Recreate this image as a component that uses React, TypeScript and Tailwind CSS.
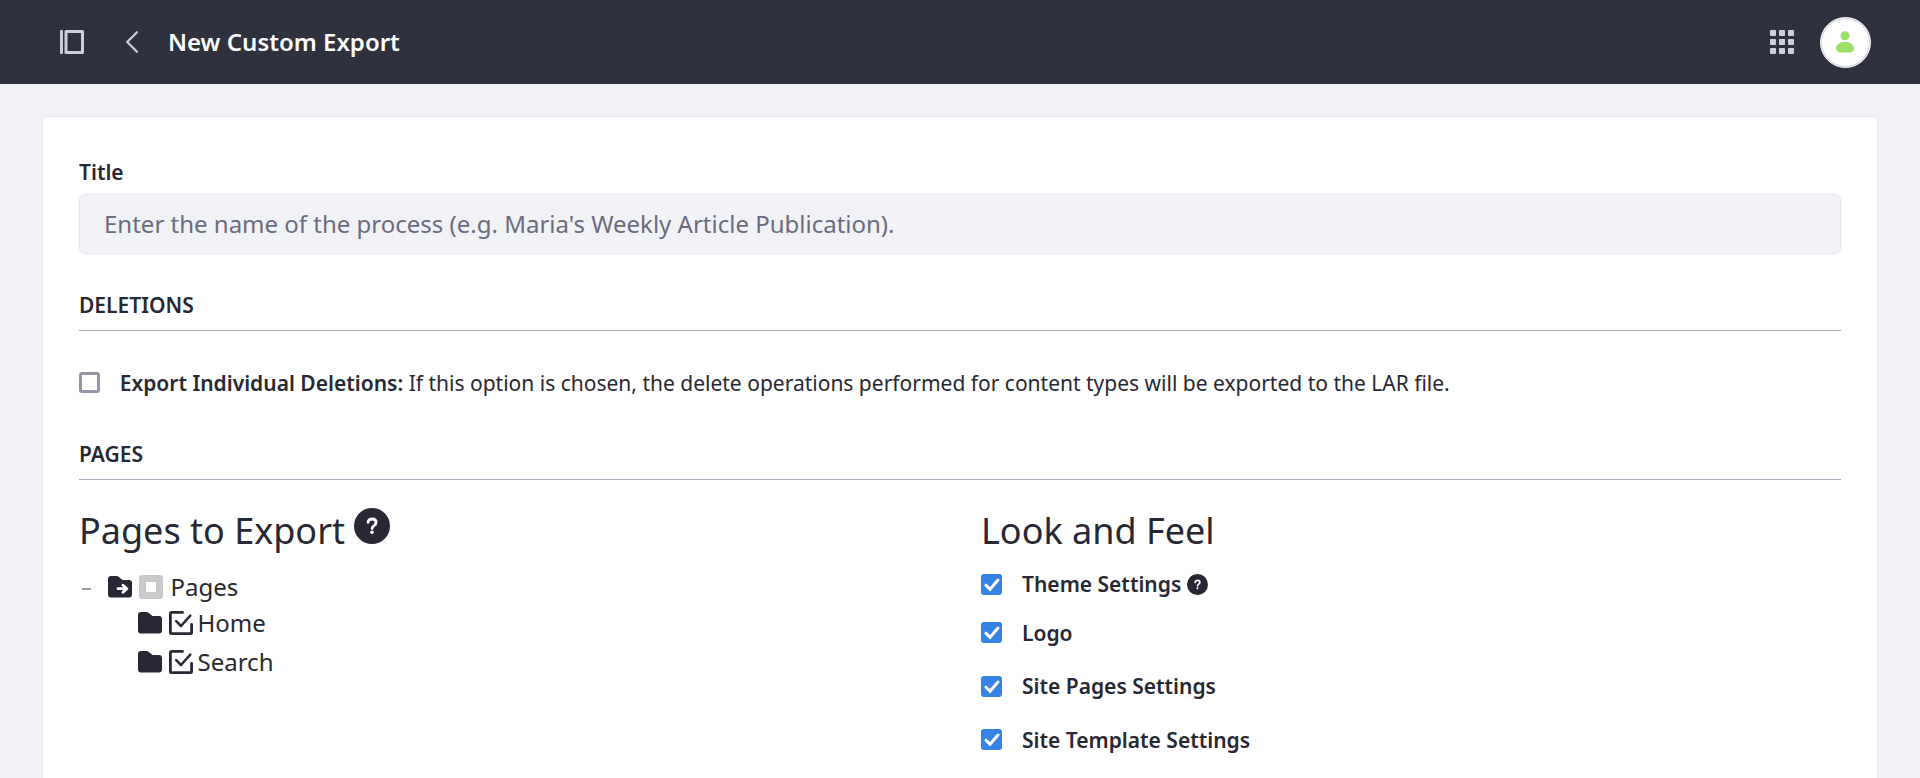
import React from "react";

function ProductMenuIcon() {
  return (
    <svg className="block size-6" viewBox="0 0 24 24" fill="#cdced9">
      <rect x="0" y="0" width="3" height="24" rx="1" />
      <path fillRule="evenodd" d="M6 0h16.500A1.500 1.500 0 0 1 24 1.500v21a1.500 1.500 0 0 1-1.500 1.500H6a1.500 1.500 0 0 1-1.500-1.500v-21A1.500 1.500 0 0 1 6 0Zm1.500 3v18H21V3Z" />
    </svg>
  );
}

function AngleLeftIcon() {
  return (
    <svg className="block size-6" viewBox="0 0 24 24" fill="none" stroke="#cdced9" strokeWidth="2.200" strokeLinecap="round" strokeLinejoin="round">
      <path d="M17 2.200 7.200 12l9.800 9.800" />
    </svg>
  );
}

function GridIcon() {
  return (
    <svg className="block size-6" viewBox="0 0 24 24" fill="#cdced9">
      {[0, 9, 18].map((y) => [0, 9, 18].map((x) => <rect key={`${x}-${y}`} x={x} y={y} width="6" height="6" rx="0.800" />))}
    </svg>
  );
}

function UserIcon() {
  return (
    <svg className="block h-[22px] w-[18px]" viewBox="0 0 18 22" fill="#9be169">
      <circle cx="9" cy="4.700" r="4.500" />
      <path d="M9 10.700c5 0 9 3.100 9 6.900 0 2.800-2.200 4-5 4H5c-2.800 0-5-1.200-5-4 0-3.800 4-6.900 9-6.900Z" />
    </svg>
  );
}

function HelpIcon({ className }: { className: string }) {
  return (
    <svg className={className} viewBox="0 0 36 36" fill="none">
      <circle cx="18" cy="18" r="18" fill="#272833" />
      <path d="M14 14.300c.3-2.100 1.900-3.300 4.100-3.300 2.300 0 4 1.300 4 3.400 0 3.200-4 3-4 6.100" stroke="#fff" strokeWidth="2.800" strokeLinecap="round" strokeLinejoin="round" />
      <circle cx="18" cy="24.300" r="1.800" fill="#fff" />
    </svg>
  );
}

function FolderIcon({ arrow = false }: { arrow?: boolean }) {
  return (
    <svg className="block size-6 shrink-0" viewBox="0 0 24 24" fill="none">
      <path d="M0 4a3 3 0 0 1 3-3h5.500c.9 0 1.700.3 2.300.9L14.600 5H21a3 3 0 0 1 3 3v11.500a3 3 0 0 1-3 3H3a3 3 0 0 1-3-3Z" fill="#272833" />
      {arrow && <path d="M10 13.700h8.500M15 10.200l3.900 3.500-3.900 3.500" stroke="#fff" strokeWidth="2.800" strokeLinecap="round" strokeLinejoin="round" />}
    </svg>
  );
}

function CheckSquareIcon() {
  return (
    <svg className="block size-6 shrink-0" viewBox="0 0 24 24" fill="none" stroke="#272833" strokeLinecap="round" strokeLinejoin="round">
      <path d="M13.500 1.400H2.500A1.100 1.100 0 0 0 1.400 2.500v19a1.100 1.100 0 0 0 1.100 1.100h19a1.100 1.100 0 0 0 1.100-1.100v-8" strokeWidth="2.800" />
      <path d="m7.200 10.200 4.800 4.800 9.300-10.300" strokeWidth="2.500" />
    </svg>
  );
}

function PartialSquareIcon() {
  return (
    <span className="flex size-6 shrink-0 items-center justify-center rounded-[3px] bg-[#c9c9cb]">
      <span className="size-[10px] rounded-[1px] bg-white" />
    </span>
  );
}

function CheckedBox() {
  return (
    <svg className="block size-[21px] shrink-0" viewBox="0 0 21 21" fill="none">
      <rect width="21" height="21" rx="3" fill="#3584e4" />
      <path d="m5 11.200 4 4.100 8-9.300" stroke="#fff" strokeWidth="3" strokeLinecap="round" strokeLinejoin="miter" />
    </svg>
  );
}

function SectionHeading({ children }: { children: React.ReactNode }) {
  return <h3 className="h-[50px] border-b border-[#a7a9bc] text-[21px] leading-[48px] font-semibold">{children}</h3>;
}

function Option({ label, help = false, className, textClass = "leading-[21px]" }: { label: string; help?: boolean; className: string; textClass?: string }) {
  return (
    <label className={`flex h-[21px] items-start text-[21px] font-semibold ${className}`}>
      <CheckedBox />
      <span className={`ml-5 ${textClass}`}>{label}</span>
      {help && <HelpIcon className="ml-[6px] block size-[21px]" />}
    </label>
  );
}

export default function App() {
  return (
    <div className="h-[778px] w-full overflow-hidden bg-[#f1f2f5] font-['Noto_Sans',sans-serif] text-[#272833]">
      <header className="flex h-[84px] items-center bg-[#30313f] pr-[49px] pl-[60px]">
        <ProductMenuIcon />
        <div className="ml-9">
          <AngleLeftIcon />
        </div>
        <h1 className="ml-6 text-2xl font-semibold text-white">New Custom Export</h1>
        <div className="ml-auto">
          <GridIcon />
        </div>
        <div className="mt-px ml-[26px] flex size-[51px] items-center justify-center rounded-full border border-[#f1f2f5] bg-white pr-px pb-px inset-ring inset-ring-[#d0d1da]">
          <UserIcon />
        </div>
      </header>

      <main className="mx-[42px] mt-8 h-[700px] rounded-md border border-[#e7e7ed] bg-white px-9 pt-[41px]">
        <label className="block h-9 text-[21px] leading-7 font-semibold">Title</label>
        <input
          className="block h-[60px] w-full rounded-md border border-[#e7e7ed] bg-[#f1f2f5] px-6 pb-[2px] text-2xl placeholder:text-[#6b6c7e] placeholder:opacity-100"
          placeholder="Enter the name of the process (e.g. Maria's Weekly Article Publication)."
        />

        <div className="mt-[27px]">
          <SectionHeading>DELETIONS</SectionHeading>
        </div>
        <label className="mt-[41px] flex h-[21px] items-start text-[21px] leading-[23px]">
          <span className="size-[21px] shrink-0 rounded-[3px] border-3 border-[#9593a5]" />
          <span className="ml-[19.75px]">
            <b className="font-semibold">Export Individual Deletions:</b> If this option is chosen, the delete operations performed for content types will be exported to the LAR file.
          </span>
        </label>

        <div className="mt-[37px]">
          <SectionHeading>PAGES</SectionHeading>
        </div>
        <div className="mt-[27px] grid grid-cols-[902px_1fr]">
          <section>
            <div className="flex h-[46px] items-start">
              <h2 className="text-4xl leading-[47px]">Pages to Export</h2>
              <HelpIcon className="mt-px ml-[9px] block size-9" />
            </div>
            <ul className="mt-4 text-2xl leading-9">
              <li className="flex h-9 items-center pl-[3px]">
                <span className="mt-1 h-[2px] w-[9px] bg-[#999]" />
                <span className="ml-[17px]">
                  <FolderIcon arrow />
                </span>
                <span className="ml-[7px]">
                  <PartialSquareIcon />
                </span>
                <span className="ml-[7.5px]">Pages</span>
              </li>
              <li className="flex h-9 items-center gap-[7px] pl-[59px]">
                <FolderIcon />
                <CheckSquareIcon />
                <span className="-ml-[2.5px]">Home</span>
              </li>
              <li className="mt-[3px] flex h-9 items-center gap-[7px] pl-[59px]">
                <FolderIcon />
                <CheckSquareIcon />
                <span className="-ml-[2.5px]">Search</span>
              </li>
            </ul>
          </section>
          <section>
            <h2 className="h-[46px] text-4xl leading-[47px]">Look and Feel</h2>
            <Option label="Theme Settings" help className="mt-[21px]" />
            <Option label="Logo" className="mt-[27px]" textClass="leading-[23px]" />
            <Option label="Site Pages Settings" className="mt-[33px]" />
            <Option label="Site Template Settings" className="mt-8" textClass="leading-[23px]" />
          </section>
        </div>
      </main>
    </div>
  );
}
